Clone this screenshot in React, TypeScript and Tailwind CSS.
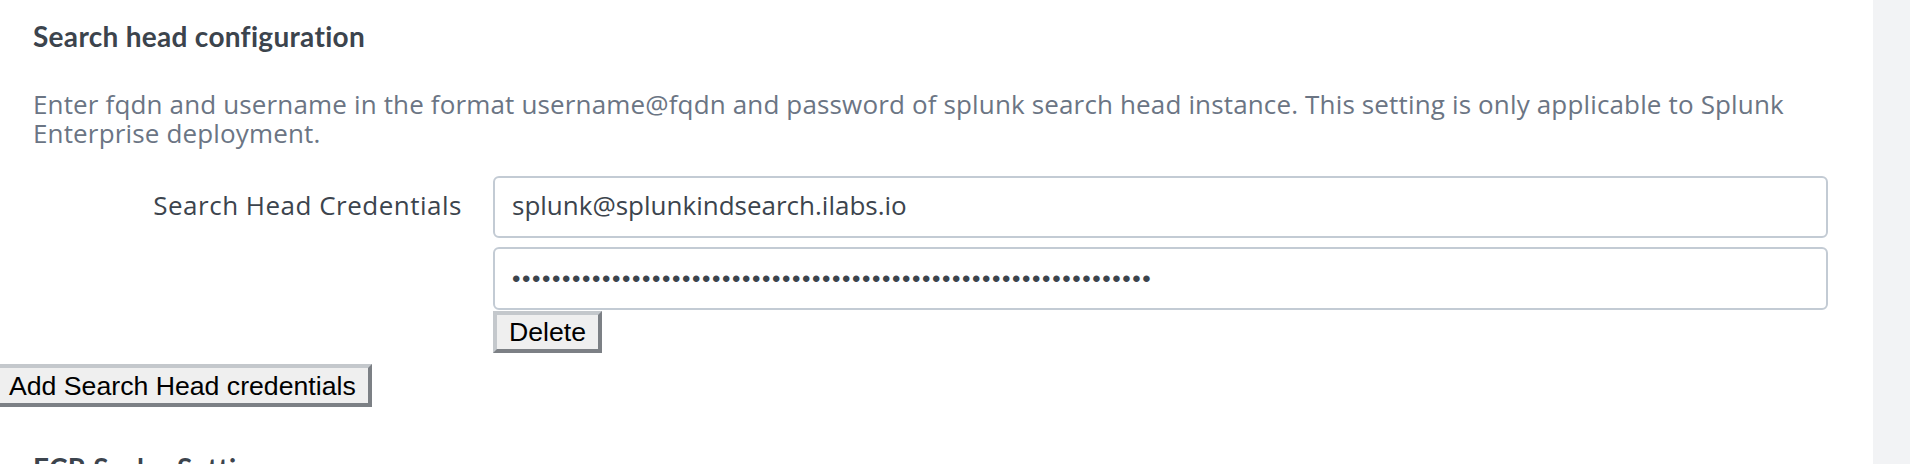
import React from "react";

export default function App() {
  const dots = "•".repeat(64);
  return (
    <div className="flex w-[1910px] h-[464px] overflow-hidden bg-white" style={{ fontFamily: "'Open Sans', Lato, sans-serif" }}>
      <div className="w-[1873px] shrink-0 pl-[33px] pr-[45px] pt-[18px]">
        <h2 className="text-[28px] leading-[36px] font-bold text-[#3c444d] m-0 tracking-[0.3px]" style={{ fontFamily: "Lato, sans-serif" }}>Search head configuration</h2>
        <p className="mt-[36px] text-[26px] leading-[29px] tracking-[0.15px] text-[#6b7584] m-0">
          Enter fqdn and username in the format username@fqdn and password of splunk search head instance. This setting is only applicable to Splunk Enterprise deployment.
        </p>
        <div className="mt-[28px] flex items-start">
          <div className="w-[460px] shrink-0 h-[62px] leading-[58px] pr-[31px] text-right text-[26px] tracking-[0.5px] text-[#3c444d]">
            Search Head Credentials
          </div>
          <div className="flex-1 flex flex-col items-start">
            <div className="w-full h-[62px] border-2 border-[#c3cbd4] rounded-[6px] bg-white flex items-center pl-[17px] pb-[4px] text-[26px] text-[#3c444d]">
              splunk@splunkindsearch.ilabs.io
            </div>
            <div className="mt-[9px] w-full h-[63px] border-2 border-[#c3cbd4] rounded-[6px] bg-white flex items-center pl-[17px] text-[24px] text-[#3c444d]">
              <span className="tracking-[1.6px]" style={{ fontFamily: "'Liberation Sans', sans-serif" }}>{dots}</span>
            </div>
            <button
              type="button"
              className="mt-px h-[42px] px-[12px] border-[4px] border-t-[#c4c8cc] border-l-[#c4c8cc] border-b-[#7c8085] border-r-[#7c8085] bg-[#efefef] text-black text-[26.67px] leading-[30px]"
              style={{ fontFamily: "'Liberation Sans', Arial, sans-serif" }}
            >
              Delete
            </button>
          </div>
        </div>
        <button
          type="button"
          className="mt-[11px] ml-[-40px] h-[43px] px-[12px] border-[4px] border-t-[#c4c8cc] border-l-[#c4c8cc] border-b-[#7c8085] border-r-[#7c8085] bg-[#efefef] text-black text-[26.67px] leading-[30px]"
          style={{ fontFamily: "'Liberation Sans', Arial, sans-serif" }}
        >
          Add Search Head credentials
        </button>
        <h2 className="mt-[43px] text-[28px] leading-[36px] font-bold text-[#3c444d] m-0 tracking-[0.3px]" style={{ fontFamily: "Lato, sans-serif" }}>ECR Scaler Settings</h2>
      </div>
      <div className="flex-1 bg-[#f2f3f5]" />
    </div>
  );
}
